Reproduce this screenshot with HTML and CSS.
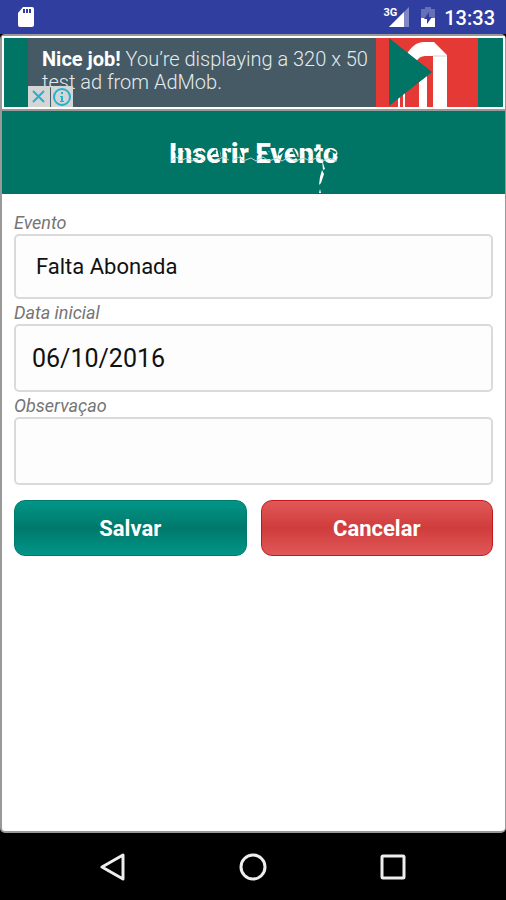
FILE: index.html
```html
<!DOCTYPE html>
<html lang="pt-BR">
<head>
    <meta charset="UTF-8">
    <meta name="viewport" content="width=device-width, initial-scale=1.0">
    <title>Inserir Evento</title>
    <link rel="stylesheet" href="styles.css">
</head>
<body>
    <div class="statusbar">
        <svg class="sd" width="18" height="22" viewBox="0 0 18 22">
            <path d="M6 1h9q2 0 2 2v16q0 2-2 2H3q-2 0-2-2V7z" fill="#fff"/>
            <path d="M6 3h2v4H6zM9 3h2v4H9zM12 3h2v4h-2z" fill="#303f9f"/>
        </svg>
        <span class="network">3G</span>
        <svg class="signal" width="20" height="20" viewBox="0 0 20 20">
            <path d="M0 20L20 0v20z" fill="#8088c4"/>
            <path d="M0 20L15 5v15z" fill="#fff"/>
        </svg>
        <svg class="battery" width="14" height="20" viewBox="0 0 14 20">
            <path d="M4 0h6v2h4v18H0V2h4z" fill="#6670b8"/>
            <path d="M0 11h14v9H0z" fill="#fff"/>
            <path d="M8 5L3 12h3v5l5-7H8z" fill="#303f9f"/>
        </svg>
        <span class="clock">13:33</span>
    </div>

    <div class="screen">
        <div class="ad">
            <div class="ad-text"><b>Nice job!</b> You’re displaying a 320 x 50 test ad from AdMob.</div>
            <svg class="ad-logo" width="102" height="69" viewBox="0 0 102 69">
                <path d="M0 0h102v69H0z" fill="#e53935"/>
                <path d="M29 19Q37 4 48 4h10l13 13v52H57V18h-8q-6 0-9 6zM43 44l8-6v31h-8zM22 58l2-2v13h-2zM27 55l2-2v16h-2z" fill="#fff"/>
                <path d="M57 18h14" stroke="#d8d0d0"/>
                <path d="M13 0l43 34-43 34z" fill="#007566"/>
            </svg>
            <div class="ad-controls">
                <button type="button" aria-label="Fechar">
                    <svg width="22" height="21" viewBox="0 0 22 21"><path d="M5 5l11 11M16 5L5 16" stroke="#27afd0" stroke-width="2"/></svg>
                </button>
                <button type="button" aria-label="Info">
                    <svg width="22" height="21" viewBox="0 0 22 21">
                        <circle cx="11" cy="11" r="8" fill="none" stroke="#27afd0" stroke-width="2"/>
                        <path d="M10 6h2v2h-2zM9 10h3v5h1v1H9v-1h1v-4H9z" fill="#27afd0"/>
                    </svg>
                </button>
            </div>
        </div>

        <header class="header">
            <h1>Inserir Evento</h1>
            <!-- worn edges and drip of the title -->
            <svg class="strokes" width="176" height="60" viewBox="0 0 176 60">
                <path d="M8 17l3 4M16 15l3 3M24 22l5-3M34 17l5 4M44 21l5-5M51 14l2 9M59 17l4 5M72 15l3 8M85 17l6 4M99 15l4 7M112 21l6-5M126 15l4 8M138 17l3 6M148 21l4-5M163 16l6 3M170 22l4-3" stroke="#007566" stroke-width="2"/>
                <path d="M4 27l6-4 3 4 7-3 5 3 8-4 4 4M50 26l6-3 6 3M65 27l7-4 4 4 8-3 5 3 7-4 6 4 8-3 5 3 7-4 6 4 9-3 6 3 8-4 5 4 6-3 8 3" fill="none" stroke="#b4d5d0"/>
                <path d="M155 26l3 9-2 1zM155 36l2 4-3 9-2 2 1-8zM153 55l1 4h-2z" fill="#fff"/>
            </svg>
        </header>

        <form class="form">
            <label for="evento">Evento</label>
            <select id="evento">
                <option>Falta Abonada</option>
            </select>

            <label for="data">Data inicial</label>
            <input type="text" id="data" value="06/10/2016">

            <label for="obs">Observaçao</label>
            <input type="text" id="obs">

            <div class="buttons">
                <button type="button" class="save">Salvar</button>
                <button type="button" class="cancel">Cancelar</button>
            </div>
        </form>
    </div>

    <nav class="navbar">
        <button type="button" aria-label="Voltar">
            <svg width="28" height="28" viewBox="0 0 28 28"><path d="M24 2v24L3 14z"/></svg>
        </button>
        <button type="button" aria-label="Início">
            <svg width="28" height="28" viewBox="0 0 28 28"><circle cx="14" cy="14" r="12"/></svg>
        </button>
        <button type="button" aria-label="Recentes">
            <svg width="28" height="28" viewBox="0 0 28 28"><rect x="3" y="3" width="22" height="22" rx="1"/></svg>
        </button>
    </nav>
</body>
</html>
```

FILE: styles.css
```css
* {
    box-sizing: border-box;
}

body {
    margin: 0;
    min-height: 100vh;
    display: flex;
    flex-direction: column;
    background-color: #000;
    font-family: Roboto, sans-serif;
}

svg {
    display: block;
}

button {
    padding: 0;
    border: none;
    background: none;
    font-family: inherit;
    cursor: pointer;
}

.statusbar {
    height: 34px;
    padding: 0 11px 0 17px;
    display: flex;
    align-items: center;
    background-color: #303f9f;
    color: #fff;
}

.network {
    margin-left: auto;
    align-self: flex-start;
    padding-top: 6px;
    font-size: 11px;
    font-weight: bold;
}

.signal {
    margin-left: -8px;
}

.battery {
    margin: 0 9px 0 12px;
}

.clock {
    padding-top: 2px;
    font-size: 20px;
    font-weight: 500;
}

.screen {
    flex: 1;
    border: 2px solid #999;
    border-right-width: 1px;
    border-radius: 5px;
    background-color: #fff;
}

.ad {
    position: relative;
    display: flex;
    height: 73px;
    border: 2px solid #fff;
    padding: 0 25px 0 24px;
    background-color: #007566;
}

.ad-text {
    flex: 1;
    padding: 10px 0 0 14px;
    background-color: #455a64;
    color: #e4ebee;
    font-size: 20px;
    font-weight: 300;
    line-height: 23px;
}

.ad-text b {
    color: #fff;
    font-weight: bold;
}

.ad-controls {
    position: absolute;
    left: 24px;
    bottom: 0;
    display: flex;
    gap: 1px;
}

.ad-controls button {
    background-color: #d4d6d6;
}

.header {
    position: relative;
    height: 85px;
    padding-top: 2px;
    border-top: 2px solid #999;
    display: flex;
    align-items: center;
    justify-content: center;
    background-color: #007566;
}

.header h1 {
    margin: 0;
    color: #fff;
    font-size: 27px;
    font-weight: 900;
}

.strokes {
    position: absolute;
    left: calc(50% - 87px);
    bottom: 0;
}

.form {
    padding: 15px 12px;
    display: flex;
    flex-direction: column;
}

.form label {
    height: 25px;
    color: #757575;
    font-size: 18px;
    font-style: italic;
    line-height: 27px;
}

.form select,
.form input {
    width: 100%;
    height: 68px;
    padding: 0 16px;
    border: 2px solid #dadada;
    border-radius: 5px;
    background-color: #fdfdfd;
    color: #111;
    font-family: inherit;
    font-size: 25px;
}

.form select {
    height: 65px;
    padding: 0 20px;
    appearance: none;
    font-size: 22px;
}

.buttons {
    display: grid;
    grid-template-columns: 1fr 1fr;
    gap: 14px;
    margin-top: 15px;
}

.buttons button {
    height: 56px;
    border-radius: 11px;
    color: #fff;
    font-size: 22px;
    font-weight: bold;
}

.buttons .save {
    border: 1px solid #00796b;
    background: linear-gradient(#009688, #00796b 50%, #009688);
}

.buttons .cancel {
    border: 1px solid #c4161c;
    background: linear-gradient(#e05858, #d03c3c 50%, #e05858);
}

.navbar {
    height: 67px;
    padding: 0 43px;
    display: grid;
    grid-template-columns: 1fr 1fr 1fr;
    background-color: #000;
}

.navbar button {
    display: flex;
    align-items: center;
    justify-content: center;
}

.navbar svg {
    fill: none;
    stroke: #eee;
    stroke-width: 3;
    stroke-linejoin: round;
}
```
